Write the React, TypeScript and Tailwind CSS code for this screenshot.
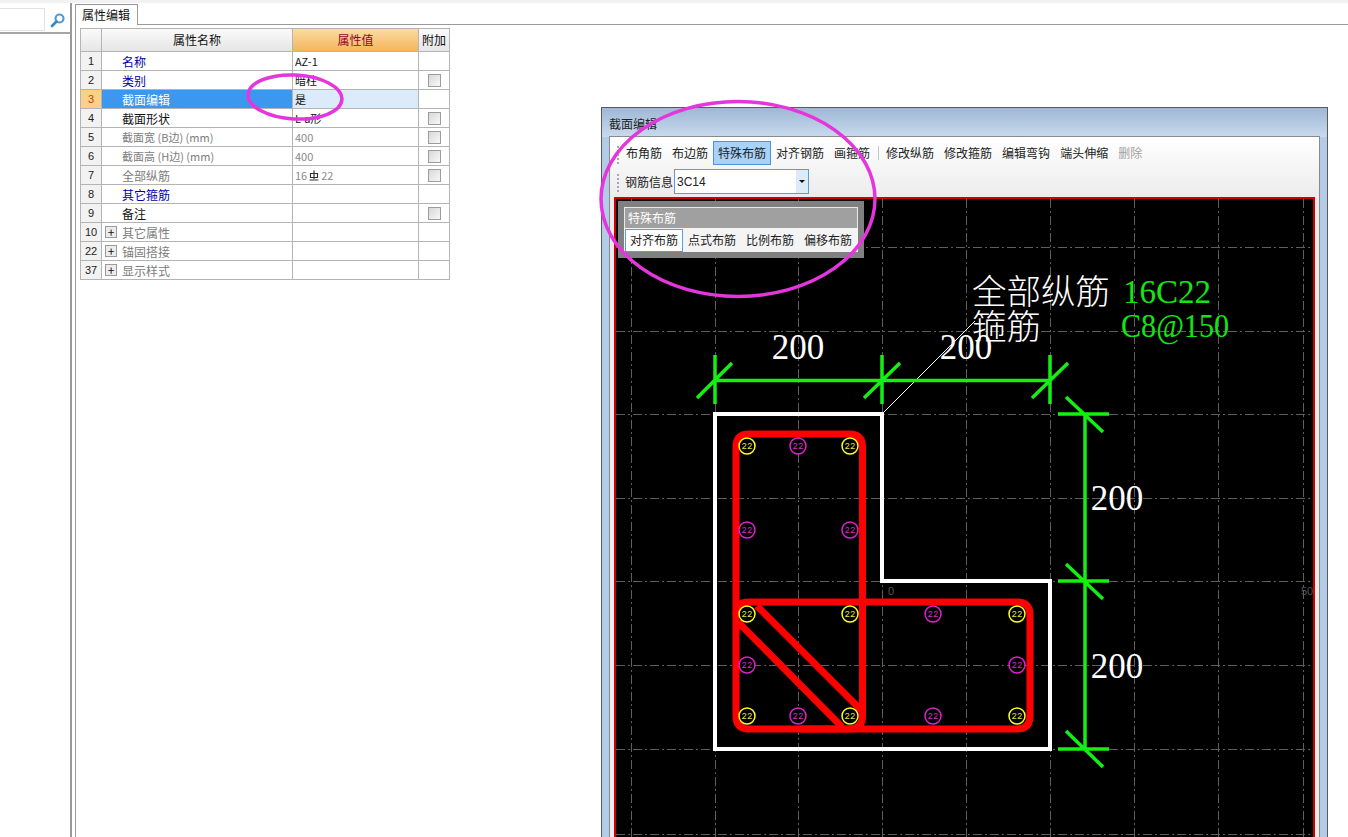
import React from "react";

const cjk = "font-['Noto_Sans_CJK_SC','Liberation_Sans',sans-serif]";

type Row = {
  no: number;
  name: string;
  tone: "blue" | "black" | "gray";
  value?: React.ReactNode;
  check?: boolean;
  plus?: boolean;
  active?: boolean;
  valueGray?: boolean;
};

const RebarMark = () => (
  <svg width="10" height="11" viewBox="0 0 10 11" className="inline-block mx-[2px] align-[-1px]">
    <path d="M1.5 8V3.5h7V8M1.5 7.5h7M5 0.5V9M0.5 10h9" fill="none" stroke="#333" strokeWidth="1.2" />
  </svg>
);

const rows: Row[] = [
  { no: 1, name: "名称", tone: "blue", value: "AZ-1" },
  { no: 2, name: "类别", tone: "blue", value: "暗柱", check: true },
  { no: 3, name: "截面编辑", tone: "blue", value: "是", active: true },
  { no: 4, name: "截面形状", tone: "black", value: "L-a形", check: true },
  { no: 5, name: "截面宽 (B边) (mm)", tone: "gray", value: "400", check: true, valueGray: true },
  { no: 6, name: "截面高 (H边) (mm)", tone: "gray", value: "400", check: true, valueGray: true },
  {
    no: 7,
    name: "全部纵筋",
    tone: "gray",
    value: (
      <>
        16
        <RebarMark />
        22
      </>
    ),
    check: true,
    valueGray: true,
  },
  { no: 8, name: "其它箍筋", tone: "blue" },
  { no: 9, name: "备注", tone: "black", check: true },
  { no: 10, name: "其它属性", tone: "gray", plus: true },
  { no: 22, name: "锚固搭接", tone: "gray", plus: true },
  { no: 37, name: "显示样式", tone: "gray", plus: true },
];

const toneClass = {
  blue: "text-[#0000a8]",
  black: "text-[#111111]",
  gray: "text-[#7c7c7c]",
};

const PropertyTable = () => (
  <div className="w-[370px] border-t border-l border-[#b4b4b4] text-[12px] leading-[18px]">
    <div className="grid grid-cols-[21px_191px_126px_31px] h-[23px] leading-[22px] text-center">
      <div className="border-r border-b border-[#b4b4b4] bg-gradient-to-b from-[#fafafa] to-[#e6e6e6]" />
      <div className="border-r border-b border-[#b4b4b4] bg-gradient-to-b from-[#fafafa] to-[#e6e6e6] text-[#111]">
        属性名称
      </div>
      <div className="border-r border-b border-[#b4b4b4] bg-gradient-to-b from-[#fbdca0] to-[#f2b65c] text-[#96002a]">
        属性值
      </div>
      <div className="border-r border-b border-[#b4b4b4] bg-gradient-to-b from-[#fafafa] to-[#e6e6e6] text-[#111]">
        附加
      </div>
    </div>
    {rows.map((r) => (
      <div key={r.no} className="grid grid-cols-[21px_191px_126px_31px] grid-rows-[19px] h-[19px]">
        <div
          className={`border-r border-b border-[#b4b4b4] text-center text-[11px] ${
            r.active ? "bg-[#fdd089] text-[#b04a00]" : "bg-[#f2f2f2] text-[#222]"
          } font-['Liberation_Sans',sans-serif]`}
        >
          {r.no}
        </div>
        <div
          className={`border-r border-b border-[#b4b4b4] flex items-center ${
            r.active ? "bg-[#3c97ee] text-white" : toneClass[r.tone]
          }`}
        >
          {r.plus ? (
            <span className="ml-[3px] mr-[5px] w-[12px] h-[12px] border border-[#9a9a9a] bg-[#ececec] flex items-center justify-center text-[#111] text-[12px] leading-none">
              +
            </span>
          ) : (
            <span className="w-[20px] shrink-0" />
          )}
          <span className={`pt-px leading-[17px] ${r.no === 5 || r.no === 6 ? "text-[11px]" : ""}`}>{r.name}</span>
        </div>
        <div
          className={`border-r border-b border-[#b4b4b4] pl-[2px] text-[11px] flex items-center ${
            r.active ? "bg-[#dcebfa] text-[#111]" : r.valueGray ? "text-[#8a8a8a]" : "text-[#111]"
          }`}
        >
          {r.value}
        </div>
        <div className="border-r border-b border-[#b4b4b4] flex items-center justify-center">
          {r.check && (
            <span className="w-[13px] h-[13px] border border-[#9c9c9c] bg-gradient-to-br from-[#d8d8d8] to-[#f8f8f8]" />
          )}
        </div>
      </div>
    ))}
  </div>
);

const tools = ["布角筋", "布边筋", "特殊布筋", "对齐钢筋", "画箍筋", "|", "修改纵筋", "修改箍筋", "编辑弯钩", "端头伸缩", "删除"];

const Grip = ({ className }: { className: string }) => (
  <span className={`flex flex-col gap-[2px] ${className}`}>
    {[0, 1, 2, 3, 4].map((i) => (
      <span key={i} className="w-[2px] h-[2px] bg-[#a8a8a8]" />
    ))}
  </span>
);

const gridX = [631, 715, 798, 882, 966, 1050, 1134, 1218, 1303];
const gridY = [247, 331, 414, 498, 581, 665, 749, 834];
const yellowBars = [
  [747, 446],
  [850, 446],
  [747, 614],
  [850, 614],
  [1017, 614],
  [747, 716],
  [850, 716],
  [1017, 716],
];
const magentaBars = [
  [798, 446],
  [747, 530],
  [850, 530],
  [933, 614],
  [747, 665],
  [1017, 665],
  [798, 716],
  [933, 716],
];

const serif = "'Liberation Serif', 'Noto Sans CJK SC', serif";

// same coordinates as the page, the viewBox starts at the canvas corner
const Drawing = () => (
  <svg viewBox="616 199 697 638" className="block w-[697px] h-[638px]">
    {gridX.map((x) => (
      <line key={x} x1={x + 0.5} y1={199} x2={x + 0.5} y2={837} stroke="#5e5e5e" strokeDasharray="9 3 2 3" />
    ))}
    {gridY.map((y) => (
      <line key={y} x1={616} y1={y + 0.5} x2={1313} y2={y + 0.5} stroke="#5e5e5e" strokeDasharray="9 3 2 3" />
    ))}

    <line x1={882} y1={414} x2={975} y2={321} stroke="#fff" />
    <path d="M715 414H882V581H1050V749H715Z" fill="none" stroke="#fff" strokeWidth="4" />

    <g fill="none" stroke="#ff0000" strokeWidth="7">
      <path d="M736 602V447Q736 434 749 434H849Q862.500 434 862.500 447V716Q862.500 729 849 729H749Q736 729 736 716V602" />
      <path d="M736 615Q736 602 749 602H1017Q1030 602 1030 615V716Q1030 729 1017 729H800" />
      <path d="M757 606L861 710M738 622L842 727" />
    </g>

    <g fill="none" stroke="#14f014" strokeWidth="3.500">
      <path d="M715 380.500H1050M715 355V404M882 355V404M1050 355V404M697 398L732 363M864 398L900 363M1032 398L1068 363" />
      <path d="M1085 414V749M1058 414H1109M1058 581H1109M1058 749H1109M1066 397L1103 432M1066 564L1103 599M1066 731L1103 767" />
    </g>

    {yellowBars.map(([x, y]) => (
      <g key={`${x}-${y}`}>
        <circle cx={x} cy={y} r={8} fill="#000" stroke="#ffff20" strokeWidth="1.500" />
        <text x={x} y={y + 3} textAnchor="middle" fontSize="9" fill="#e6e640" fontFamily="'Liberation Mono', monospace">
          22
        </text>
      </g>
    ))}
    {magentaBars.map(([x, y]) => (
      <g key={`${x}-${y}`}>
        <circle cx={x} cy={y} r={8} fill="#000" stroke="#e020d0" strokeWidth="1.500" />
        <text x={x} y={y + 3} textAnchor="middle" fontSize="9" fill="#d030c0" fontFamily="'Liberation Mono', monospace">
          22
        </text>
      </g>
    ))}

    <g fontFamily={serif} fontSize="35" fill="#fff" textAnchor="middle">
      <text x={798} y={359}>200</text>
      <text x={966} y={359}>200</text>
      <text x={1117} y={510}>200</text>
      <text x={1117} y={678}>200</text>
    </g>
    <g fontFamily={serif} fontSize="34.500" fill="#fff" fontWeight="300">
      <text x={972} y={304}>全部纵筋</text>
      <text x={972} y={339}>箍筋</text>
    </g>
    <g fontFamily={serif} fontSize="33" fill="#14e614">
      <text x={1123} y={303} textLength={88} lengthAdjust="spacingAndGlyphs">16C22</text>
      <text x={1121} y={337} textLength={108} lengthAdjust="spacingAndGlyphs">C8@150</text>
    </g>
    <text x={888} y={595} fontSize="11" fill="#555" fontFamily="'Liberation Sans', sans-serif">0</text>
    <text x={1301} y={595} fontSize="11" fill="#555" fontFamily="'Liberation Sans', sans-serif">50</text>
  </svg>
);

const SectionDialog = () => (
  <div className="absolute left-[601px] top-[107px] w-[727px] h-[740px] border-t border-l border-r border-[#5a5a5a] bg-[#b3cbe6] flex flex-col">
    <div className="absolute left-0 right-0 top-0 h-[29px] bg-gradient-to-b from-[#9fb8d6] to-[#c8daee]" />
    <div className="relative h-[28px] pl-[7px] pt-[7px] text-[12px] leading-[18px] text-[#222]">截面编辑</div>
    <div className="relative mx-[7px] flex-1 border-t border-l border-r border-[#8a8a8a] bg-gradient-to-b from-white to-[#ececec] to-[60px] flex flex-col">
      <div className="h-[31px] flex items-center pl-[11px] text-[12px] text-[#222] relative">
        <Grip className="absolute left-[7px] top-[9px]" />
        {tools.map((t, i) =>
          t === "|" ? (
            <span key={i} className="w-[6px] flex justify-center">
              <span className="w-px h-[14px] bg-[#c4c4c4]" />
            </span>
          ) : (
            <span
              key={t}
              className={`px-[4px] h-[24px] leading-[22px] border ${
                t === "特殊布筋"
                  ? "bg-[#a8d2f8] border-[#4c94d8]"
                  : t === "删除"
                    ? "border-transparent text-[#a2a2a2]"
                    : "border-transparent"
              }`}
            >
              {t}
            </span>
          ),
        )}
      </div>
      <div className="h-[27px] flex items-center pl-[15px] text-[12px] text-[#222] relative">
        <Grip className="absolute left-[7px] top-[6px]" />
        <span>钢筋信息</span>
        <div className="ml-px w-[135px] h-[25px] border border-[#5a9bd8] bg-white flex items-center justify-between">
          <span className="pl-[2px] text-[12px] font-['Liberation_Sans',sans-serif]">3C14</span>
          <span className="w-[12px] h-full bg-[#dcebf9] flex items-center justify-center">
            <span className="border-t-[3px] border-x-[3px] border-t-[#111] border-x-transparent" />
          </span>
        </div>
      </div>
      <div className="relative flex-1 mx-[4px] mt-[2px] mb-0 border-2 border-[#d00000] bg-black overflow-hidden">
        <Drawing />
        <div className="absolute left-[2px] top-[2px] w-[246px] h-[57px] bg-[#808080] pt-[6px] px-[6px]">
          <div className="h-[21px] border-t border-x border-[#e8e8e8] bg-[#a0a0a0] pl-[3px] text-[12px] leading-[19px] text-white">
            特殊布筋
          </div>
          <div className="h-[24px] bg-[#f4f4f4] flex items-center pl-px text-[12px] text-[#222]">
            <span className="h-[23px] leading-[20px] px-[4px] border border-[#5a9bd8] bg-white">对齐布筋</span>
            <span className="ml-[5px]">点式布筋</span>
            <span className="ml-[10px]">比例布筋</span>
            <span className="ml-[10px]">偏移布筋</span>
          </div>
        </div>
      </div>
    </div>
  </div>
);

export default function App() {
  return (
    <div className={`relative w-[1348px] h-[837px] overflow-hidden bg-white ${cjk}`}>
      <div className="h-[3px] bg-[#f2f2f2]" />
      <div className="flex h-[834px]">
        <aside className="w-[72px] shrink-0 border-r-2 border-[#9a9a9a]">
          <div className="h-[24px] border-b-2 border-[#a6a6a6] flex items-start pt-[5px] box-content">
            <div className="w-[45px] h-[23px] border-y border-r border-[#e2e2e2] bg-white" />
            <svg width="16" height="16" viewBox="0 0 16 16" className="ml-[5px] mt-[4px]">
              <circle cx="9.500" cy="6.500" r="4" fill="#fff" stroke="#4f9ad6" strokeWidth="2.200" />
              <path d="M6.500 9.500L2 14" stroke="#3b86c6" strokeWidth="2.800" strokeLinecap="round" />
            </svg>
          </div>
        </aside>
        <main className="flex-1 pl-[3px]">
          <div className="h-[22px] border-b border-[#9a9a9a] flex items-end relative">
            <div className="w-[63px] h-[21px] -mb-px border-t border-x border-[#9a9a9a] bg-white text-[12px] leading-[20px] text-[#111] pl-[6px]">
              属性编辑
            </div>
          </div>
          <div className="h-full border-l border-[#9a9a9a] pl-[4px] pt-[3px]">
            <PropertyTable />
          </div>
        </main>
      </div>
      <SectionDialog />
      {/* hand drawn markup over the screenshot */}
      <svg className="absolute inset-0 pointer-events-none" width="1348" height="837" viewBox="0 0 1348 837">
        <ellipse cx="295" cy="97" rx="47" ry="22" fill="none" stroke="#e535dc" strokeWidth="3.500" transform="rotate(3 295 97)" />
        <ellipse cx="738" cy="199" rx="137" ry="97.500" fill="none" stroke="#e535dc" strokeWidth="3.500" />
      </svg>
    </div>
  );
}
